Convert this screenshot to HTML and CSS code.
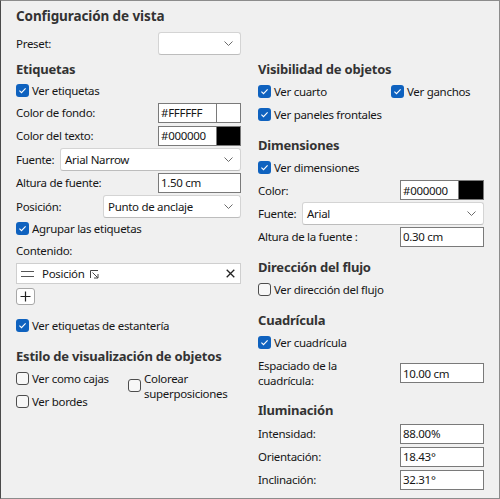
FILE: index.html
```html
<!DOCTYPE html>
<html lang="es">
<head>
<meta charset="utf-8">
<title>Configuración de vista</title>
<link rel="stylesheet" href="styles.css">
</head>
<body>
<div class="panel">
  <div class="title">Configuración de vista</div>
  <div class="columns">
    <div class="col">
      <div class="row r-preset">
        <span>Preset:</span>
        <div class="select w-preset"><span></span><svg class="chev" width="9" height="5" viewBox="0 0 9 5"><path d="M0.5 0.5 L4.5 4.5 L8.5 0.5"/></svg></div>
      </div>
      <div class="heading h-etq">Etiquetas</div>
      <div class="check on h21"><span class="cb"><svg width="13" height="13" viewBox="0 0 13 13"><path d="M3.4 6.7 L5.5 8.7 L9.6 4.4"/></svg></span>Ver etiquetas</div>
      <div class="row">
        <span>Color de fondo:</span>
        <div class="color w83"><span class="hex">#FFFFFF</span><span class="swatch white"></span></div>
      </div>
      <div class="row">
        <span>Color del texto:</span>
        <div class="color w83"><span class="hex">#000000</span><span class="swatch black"></span></div>
      </div>
      <div class="row h24">
        <span>Fuente:</span>
        <div class="select w-font-l"><span>Arial Narrow</span><svg class="chev" width="9" height="5" viewBox="0 0 9 5"><path d="M0.5 0.5 L4.5 4.5 L8.5 0.5"/></svg></div>
      </div>
      <div class="row">
        <span>Altura de fuente:</span>
        <div class="input w83">1.50 cm</div>
      </div>
      <div class="row h24">
        <span>Posición:</span>
        <div class="select w-pos"><span>Punto de anclaje</span><svg class="chev" width="9" height="5" viewBox="0 0 9 5"><path d="M0.5 0.5 L4.5 4.5 L8.5 0.5"/></svg></div>
      </div>
      <div class="check on h21"><span class="cb"><svg width="13" height="13" viewBox="0 0 13 13"><path d="M3.4 6.7 L5.5 8.7 L9.6 4.4"/></svg></span>Agrupar las etiquetas</div>
      <div class="row">
        <span>Contenido:</span>
      </div>
      <div class="list-item">
        <svg class="handle" width="13" height="6" viewBox="0 0 13 6"><path d="M0 0.5 H13 M0 5.5 H13"/></svg>
        <span class="item-text">Posición</span>
        <svg class="anchor" width="9" height="9" viewBox="0 0 9 9"><path d="M0.5 8 V0.5 H8"/><path d="M2.5 2.5 L7.8 7.8"/><path d="M8 4 V8 H4"/></svg>
        <svg class="close" width="9" height="9" viewBox="0 0 9 9"><path d="M0.7 0.7 L8.3 8.3 M8.3 0.7 L0.7 8.3"/></svg>
      </div>
      <div class="plus-btn"><svg width="11" height="11" viewBox="0 0 11 11"><path d="M5.5 0.5 V10.5 M0.5 5.5 H10.5"/></svg></div>
      <div class="check on h21 mt10"><span class="cb"><svg width="13" height="13" viewBox="0 0 13 13"><path d="M3.4 6.7 L5.5 8.7 L9.6 4.4"/></svg></span>Ver etiquetas de estantería</div>
      <div class="heading mt8">Estilo de visualización de objetos</div>
      <div class="style-grid">
        <div class="check"><span class="cb"></span>Ver como cajas</div>
        <div class="check multi"><span class="cb"></span><span class="two-line">Colorear<br>superposiciones</span></div>
        <div class="check"><span class="cb"></span>Ver bordes</div>
      </div>
    </div>

    <div class="col">
      <div class="heading mt26">Visibilidad de objetos</div>
      <div class="vis-grid">
        <div class="check on"><span class="cb"><svg width="13" height="13" viewBox="0 0 13 13"><path d="M3.4 6.7 L5.5 8.7 L9.6 4.4"/></svg></span>Ver cuarto</div>
        <div class="check on"><span class="cb"><svg width="13" height="13" viewBox="0 0 13 13"><path d="M3.4 6.7 L5.5 8.7 L9.6 4.4"/></svg></span>Ver ganchos</div>
        <div class="check on span2"><span class="cb"><svg width="13" height="13" viewBox="0 0 13 13"><path d="M3.4 6.7 L5.5 8.7 L9.6 4.4"/></svg></span>Ver paneles frontales</div>
      </div>
      <div class="heading mt7">Dimensiones</div>
      <div class="check on"><span class="cb"><svg width="13" height="13" viewBox="0 0 13 13"><path d="M3.4 6.7 L5.5 8.7 L9.6 4.4"/></svg></span>Ver dimensiones</div>
      <div class="row h22">
        <span>Color:</span>
        <div class="color w84"><span class="hex">#000000</span><span class="swatch black"></span></div>
      </div>
      <div class="row h24">
        <span>Fuente:</span>
        <div class="select w-font-r"><span>Arial</span><svg class="chev" width="9" height="5" viewBox="0 0 9 5"><path d="M0.5 0.5 L4.5 4.5 L8.5 0.5"/></svg></div>
      </div>
      <div class="row">
        <span>Altura de la fuente :</span>
        <div class="input w84">0.30 cm</div>
      </div>
      <div class="heading mt7">Dirección del flujo</div>
      <div class="check"><span class="cb"></span>Ver dirección del flujo</div>
      <div class="heading mt7">Cuadrícula</div>
      <div class="check on"><span class="cb"><svg width="13" height="13" viewBox="0 0 13 13"><path d="M3.4 6.7 L5.5 8.7 L9.6 4.4"/></svg></span>Ver cuadrícula</div>
      <div class="row h30 mt4">
        <span class="two-line">Espaciado de la<br>cuadrícula:</span>
        <div class="input w84">10.00 cm</div>
      </div>
      <div class="heading mt10">Iluminación</div>
      <div class="row mt1">
        <span>Intensidad:</span>
        <div class="input w84">88.00%</div>
      </div>
      <div class="row">
        <span>Orientación:</span>
        <div class="input w84">18.43°</div>
      </div>
      <div class="row">
        <span>Inclinación:</span>
        <div class="input w84">32.31°</div>
      </div>
    </div>
  </div>
</div>
</body>
</html>
```

FILE: styles.css
```css
* { box-sizing: border-box; }
html, body { margin: 0; padding: 0; }
body {
  width: 500px;
  height: 499px;
  background: #f0f0f0;
  font-family: "Noto Sans", "Open Sans", sans-serif;
  font-size: 11.5px;
  letter-spacing: -0.3px;
  color: #161616;
  overflow: hidden;
}
.panel {
  width: 500px;
  height: 499px;
  border: 1px solid #8c8c8c;
  border-left-color: #4a4a4a;
  padding: 4px 15px 0 15px;
}
.title {
  height: 22px;
  line-height: 22px;
  font-size: 13.5px;
  letter-spacing: -0.1px;
  font-weight: 700;
  color: #333;
}
.columns {
  margin-top: 4px;
  display: grid;
  grid-template-columns: 225px 226px;
  column-gap: 17px;
  align-items: start;
}
.col { display: flex; flex-direction: column; }
.heading {
  height: 23px;
  display: flex;
  align-items: center;
  font-size: 13px;
  letter-spacing: -0.2px;
  font-weight: 700;
  color: #333;
  white-space: nowrap;
}
.h-etq { margin-top: 1px; }
.mt1 { margin-top: 1px; }
.mt4 { margin-top: 4px; }
.mt7 { margin-top: 7px; }
.mt8 { margin-top: 8px; }
.mt10 { margin-top: 10px; }
.mt26 { margin-top: 26px; }

.row {
  height: 23px;
  display: flex;
  align-items: center;
  justify-content: space-between;
  white-space: nowrap;
}
.r-preset { height: 25px; }
.h21 { height: 21px; }
.h22 { height: 22px; }
.h24 { height: 24px; }
.h30 { height: 30px; }
.two-line { line-height: 15px; }

.check {
  height: 23px;
  display: flex;
  align-items: center;
  gap: 3px;
  white-space: nowrap;
}
.check.h21 { height: 21px; }
.cb {
  flex: none;
  width: 13px;
  height: 13px;
  border: 1px solid #4d4d4d;
  border-radius: 3px;
  background: #f7f7f7;
  display: flex;
}
.check.on .cb {
  border: none;
  background: #0f62bf;
}
.cb svg path {
  fill: none;
  stroke: #fff;
  stroke-width: 1.1;
}

.input, .color {
  height: 20px;
  background: #fff;
  border: 1px solid #7a7a7a;
  display: flex;
  align-items: center;
}
.input { padding: 0 2px; }
.w83 { width: 83px; }
.w84 { width: 84px; }
.color .hex { flex: 1; padding: 0 2px; }
.color .swatch { width: 24px; height: 100%; border-left: 1px solid #7a7a7a; }
.color.w84 .swatch { width: 25px; }
.swatch.white { background: #fff; }
.swatch.black { background: #000; }

.select {
  height: 23px;
  background: #fff;
  border: 1px solid #d4d4d4;
  border-bottom-color: #bdbdbd;
  border-radius: 3px;
  display: flex;
  align-items: center;
  justify-content: space-between;
  padding: 0 7px 0 4px;
}
.w-preset { width: 83px; }
.w-font-l { width: 181px; }
.w-pos { width: 138px; }
.w-font-r { width: 182px; }
.chev path { fill: none; stroke: #6b6b6b; stroke-width: 1; }

.list-item {
  margin-top: 1px;
  height: 21px;
  background: #fff;
  border: 1px solid #cfcfcf;
  display: flex;
  align-items: center;
  padding-left: 4px;
}
.handle { flex: none; }
.handle path { stroke: #555; stroke-width: 1; fill: none; }
.item-text { margin-left: 8px; }
.anchor { margin-left: 5px; margin-top: 2px; }
.anchor path { stroke: #444; stroke-width: 1; fill: none; }
.close { margin-left: auto; margin-right: 5px; }
.close path { stroke: #222; stroke-width: 1.3; fill: none; }

.plus-btn {
  margin-top: 4px;
  width: 19px;
  height: 17px;
  background: #fff;
  border: 1px solid #a8a8a8;
  border-radius: 3px;
  display: flex;
  align-items: center;
  justify-content: center;
}
.plus-btn path { stroke: #222; stroke-width: 1.2; fill: none; }

.style-grid {
  display: grid;
  grid-template-columns: 112px auto;
  grid-template-rows: 23px 23px;
}
.check.multi {
  grid-column: 2;
  grid-row: 1 / span 2;
  height: 37px;
  align-items: center;
}
.vis-grid {
  display: grid;
  grid-template-columns: 133px auto;
}
.span2 { grid-column: 1 / span 2; }
```
